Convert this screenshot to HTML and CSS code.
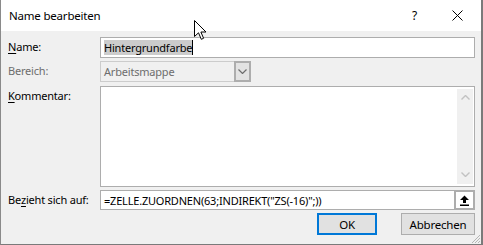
FILE: index.html
```html
<!DOCTYPE html>
<html lang="de">
<head>
  <meta charset="UTF-8">
  <title>Name bearbeiten</title>
  <link rel="stylesheet" href="styles.css">
</head>
<body>
  <div class="dialog">
    <!-- Title bar -->
    <div class="titlebar">
      <span class="title">Name bearbeiten</span>
      <span class="help">?</span>
      <span class="close">
        <svg width="11" height="11" viewBox="0 0 11 11"><path d="M0.5 0.5 L10.5 10.5 M10.5 0.5 L0.5 10.5" stroke="#000" stroke-width="1" fill="none"/></svg>
      </span>
    </div>

    <div class="content">
      <div class="form">
        <label class="label"><u>N</u>ame:</label>
        <div class="field textbox"><span class="selected">Hintergrundfarbe</span><span class="caret"></span></div>

        <label class="label disabled">Bereich:</label>
        <div class="field combo">
          <span class="combo-text">Arbeitsmappe</span>
          <span class="combo-btn">
            <svg width="9" height="5" viewBox="0 0 9 5"><path d="M0.5 0.5 L4.5 4.5 L8.5 0.5" stroke="#6d6d6d" stroke-width="1.2" fill="none"/></svg>
          </span>
        </div>

        <label class="label label-top"><u>K</u>ommentar:</label>
        <div class="field memo">
          <div class="memo-area"></div>
          <div class="scrollbar">
            <svg width="9" height="5" viewBox="0 0 9 5"><path d="M0.5 4.5 L4.5 0.5 L8.5 4.5" stroke="#c2c2c2" stroke-width="1.4" fill="none"/></svg>
            <svg width="9" height="5" viewBox="0 0 9 5"><path d="M0.5 0.5 L4.5 4.5 L8.5 0.5" stroke="#c2c2c2" stroke-width="1.4" fill="none"/></svg>
          </div>
        </div>

        <label class="label">Be<u>z</u>ieht sich auf:</label>
        <div class="refedit">
          <div class="field ref-text">=ZELLE.ZUORDNEN(63;INDIREKT("ZS(-16)";))</div>
          <span class="ref-btn">
            <svg width="11" height="11" viewBox="0 0 11 11"><path d="M5.5 0.5 L10 5 L7 5 L7 8 L4 8 L4 5 L1 5 Z" fill="#000"/><rect x="1" y="9.5" width="9" height="1.5" fill="#000"/></svg>
          </span>
        </div>
      </div>

      <div class="buttons">
        <button class="btn btn-default">OK</button>
        <button class="btn">Abbrechen</button>
      </div>
    </div>

    <!-- mouse pointer over the title bar -->
    <svg class="pointer" width="13" height="21" viewBox="0 0 13 21">
      <path d="M0.5 0.5 L0.5 16.5 L4.5 12.8 L7.3 19.3 L9.6 18.3 L6.9 12 L12 12 Z" fill="#fff" stroke="#000" stroke-width="1"/>
    </svg>

    <svg class="grip" width="11" height="11" viewBox="0 0 11 11">
      <path d="M10 2 L2 10 M10 5 L5 10 M10 8 L8 10" stroke="#b5b5b5" stroke-width="1"/>
    </svg>
  </div>
</body>
</html>
```

FILE: styles.css
```css
body {
  margin: 0;
  font-family: "Noto Sans", "Open Sans", sans-serif;
  font-size: 11px;
  letter-spacing: -0.2px;
  color: #000;
  background-color: #fff;
}

.dialog {
  position: relative;
  width: 483px;
  height: 245px;
  box-sizing: border-box;
  border-left: 1px solid #8a8a8a;
  border-right: 2px solid #7a7a7a;
  border-bottom: 1px solid #7a7a7a;
  display: flex;
  flex-direction: column;
  background-color: #f0f0f0;
  overflow: hidden;
}

.titlebar {
  height: 31px;
  flex: none;
  display: flex;
  align-items: center;
  background-color: #fff;
}

.title {
  margin-left: 8px;
  font-size: 11.5px;
  flex: 1;
}

.help {
  font-size: 12px;
  margin-right: 35px;
}

.close {
  display: flex;
  margin-right: 18px;
}

.content {
  flex: 1;
  padding: 6px 6px 0 7px;
  display: flex;
  flex-direction: column;
}

.form {
  display: grid;
  grid-template-columns: 92px 1fr;
  grid-template-rows: 21px 21px 102px 20px;
  row-gap: 3px;
}

.label {
  display: flex;
  align-items: center;
  padding-bottom: 2px;
  white-space: nowrap;
}

.label u {
  text-decoration-thickness: 1px;
  text-underline-offset: 2px;
}

.label-top {
  align-items: flex-start;
  padding-top: 3px;
}

.disabled {
  color: #6d6d6d;
}

.field {
  box-sizing: border-box;
  border: 1px solid #adadad;
  background-color: #fff;
  display: flex;
  align-items: center;
  padding-left: 3px;
  white-space: nowrap;
}

.selected {
  background-color: #cccccc;
  line-height: 15px;
}

.caret {
  width: 1px;
  height: 15px;
  background-color: #000;
}

.combo {
  width: 151px;
  background-color: #f0f0f0;
  border-color: #cccccc;
  color: #6d6d6d;
  padding-right: 0;
}

.combo-text {
  flex: 1;
}

.combo-btn {
  box-sizing: border-box;
  width: 17px;
  height: 21px;
  margin: -1px -1px -1px 0;
  border: 2px solid #adadad;
  background-color: #e3e3e3;
  display: flex;
  align-items: center;
  justify-content: center;
}

.memo {
  margin-top: 1px;
  padding: 2px 1px 2px 0;
  align-items: stretch;
}

.memo-area {
  flex: 1;
}

.scrollbar {
  width: 16px;
  background-color: #f0f0f0;
  display: flex;
  flex-direction: column;
  justify-content: space-between;
  align-items: center;
  padding: 6px 0 7px;
}

.refedit {
  display: flex;
}

.ref-text {
  flex: 1;
}

.ref-btn {
  box-sizing: border-box;
  width: 21px;
  border: 2px solid #adadad;
  margin-left: -1px;
  background-color: #fff;
  display: flex;
  align-items: center;
  justify-content: center;
}

.buttons {
  display: flex;
  justify-content: flex-end;
  gap: 24px;
  margin-top: 3px;
}

.btn {
  height: 22px;
  box-sizing: border-box;
  font-family: inherit;
  font-size: 11.5px;
  letter-spacing: -0.2px;
  background-color: #e1e1e1;
  border: 1px solid #adadad;
  padding: 0;
  color: #000;
}

.btn-default {
  width: 60px;
  border: 2px solid #0078d7;
}

.btn:not(.btn-default) {
  width: 74px;
}

.pointer {
  position: absolute;
  left: 193px;
  top: 20px;
}

.grip {
  position: absolute;
  right: 0;
  bottom: 0;
}
```
